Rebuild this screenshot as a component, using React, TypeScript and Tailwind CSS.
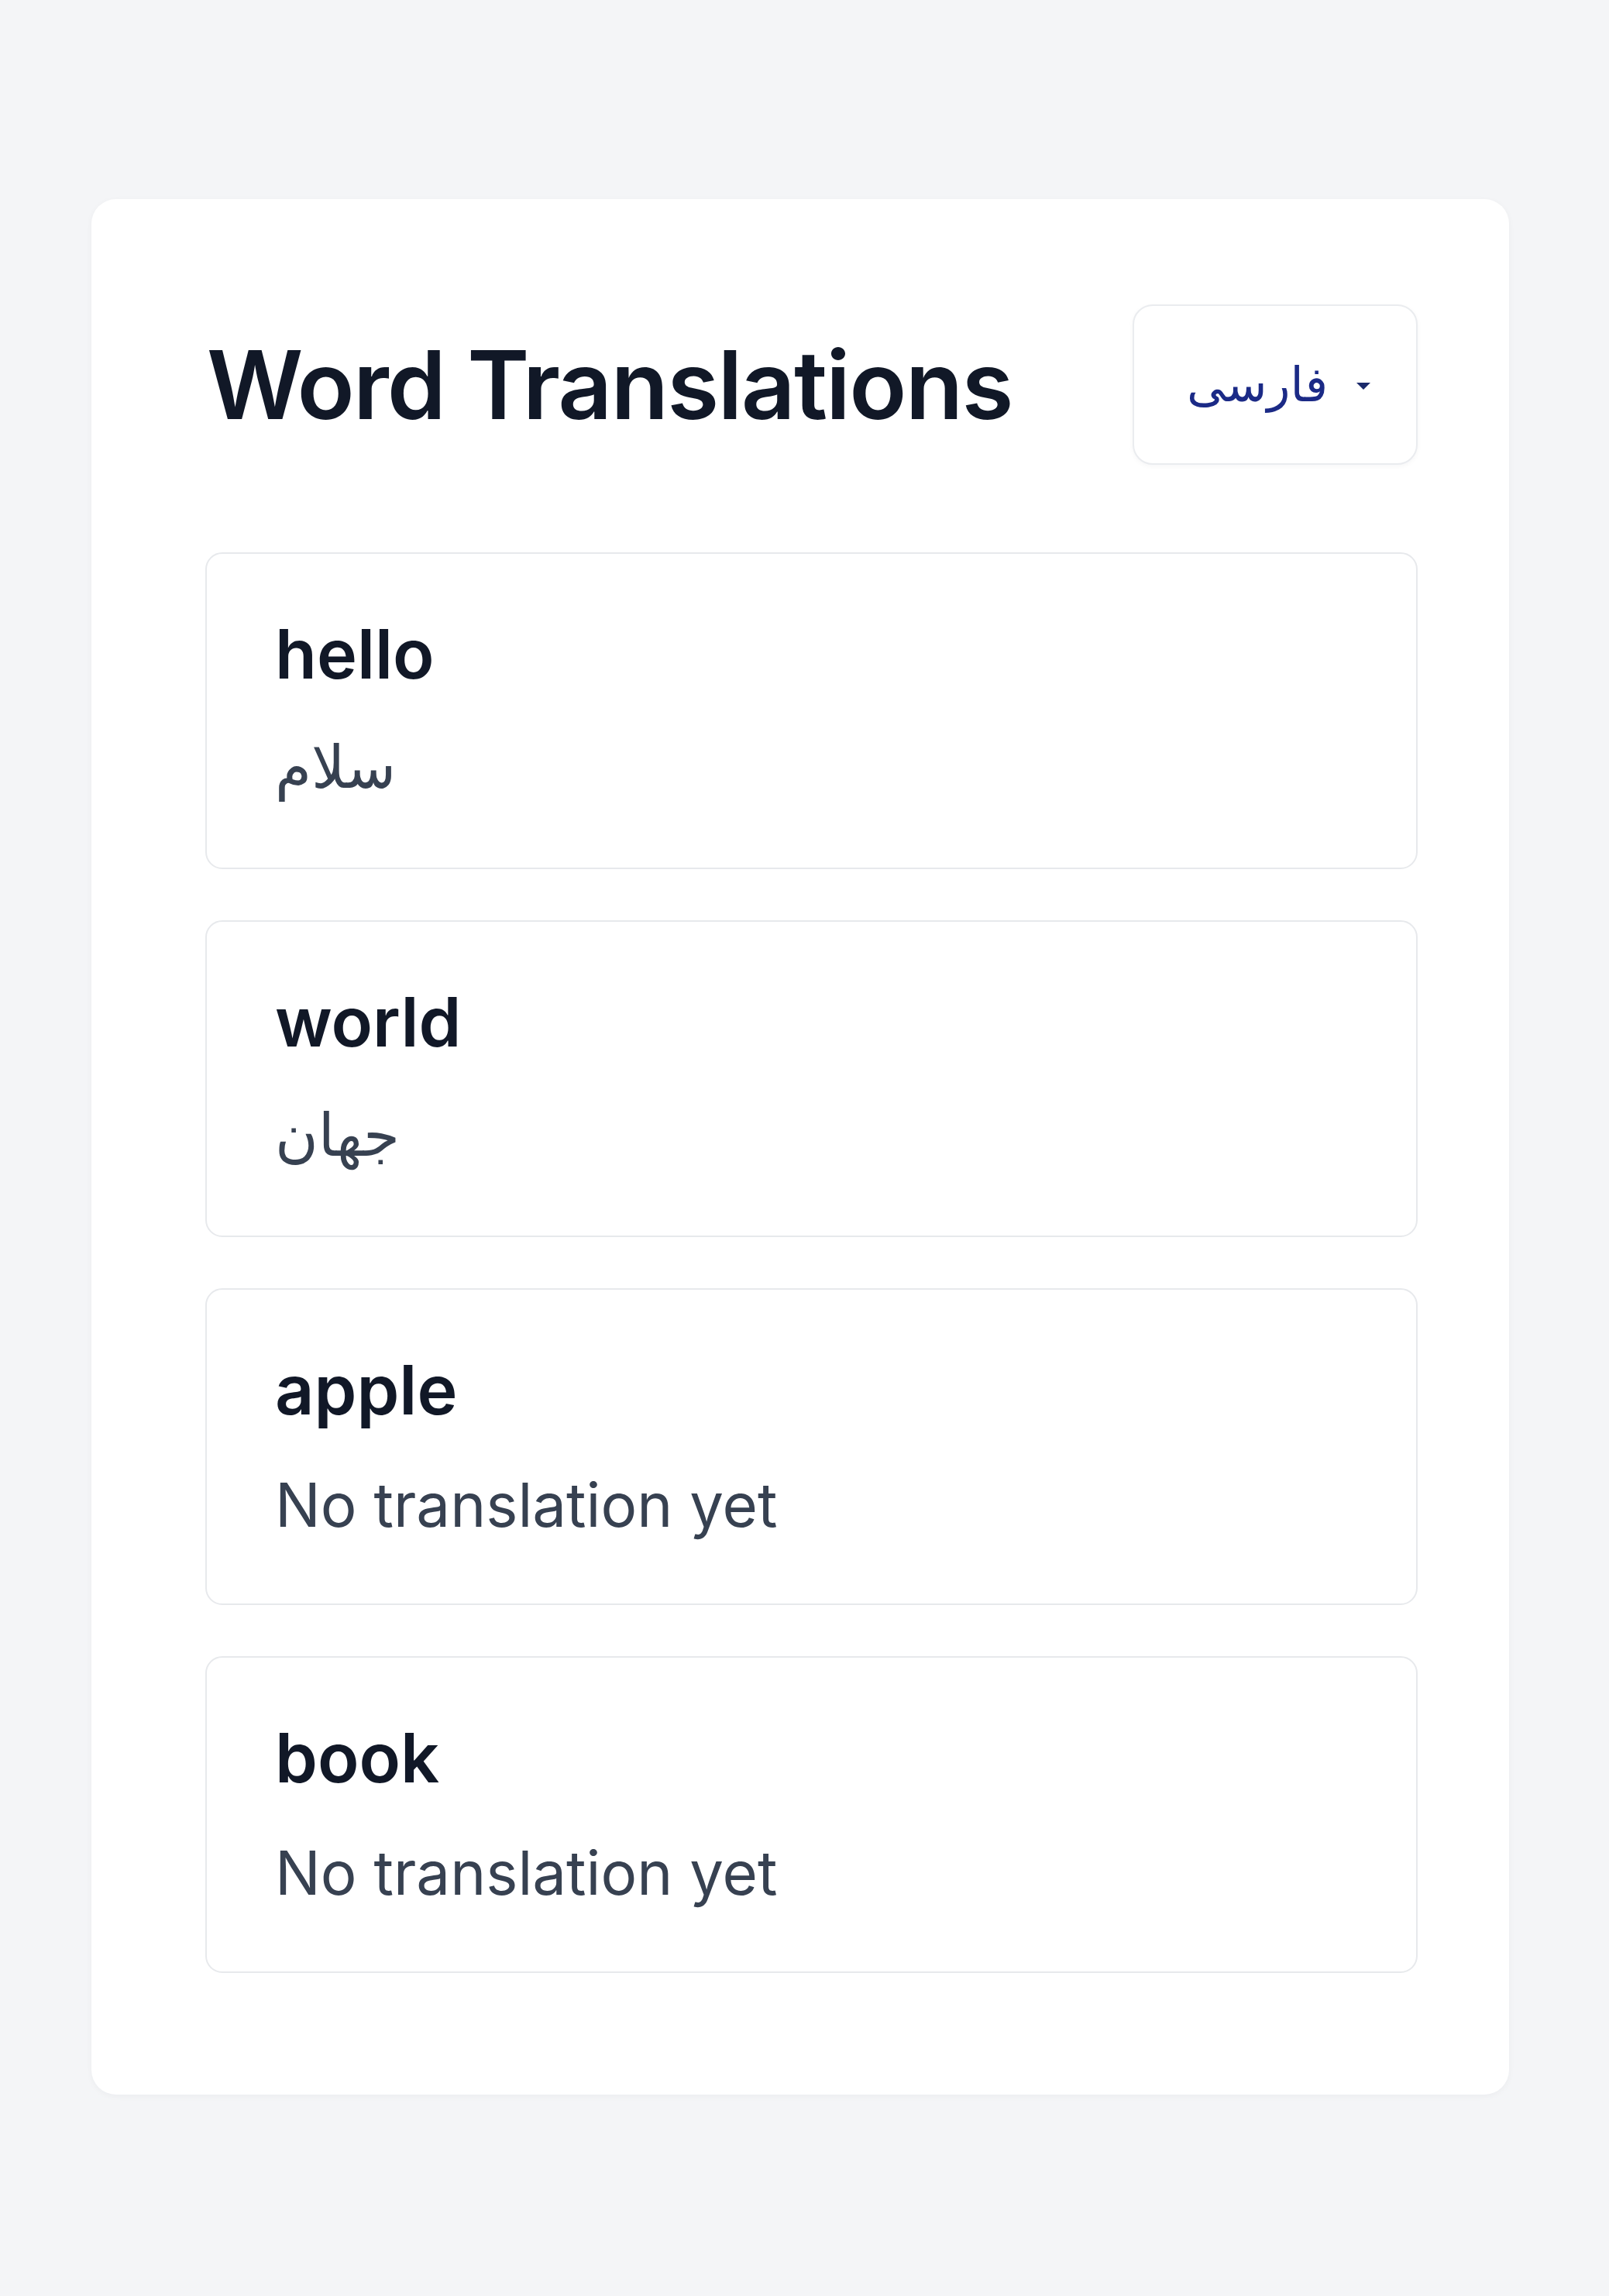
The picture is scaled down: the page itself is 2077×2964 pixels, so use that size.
const words = [
  { word: "hello", translation: "سلام" },
  { word: "world", translation: "جهان" },
  { word: "apple", translation: null },
  { word: "book", translation: null },
];

function LanguageSelect() {
  return (
    <button
      type="button"
      className="flex h-[207px] w-[368px] items-center justify-center gap-[36px] rounded-[26px] border-2 border-[#eaecef] bg-white pl-[10px] shadow-[0_2px_6px_rgba(15,23,42,0.04)]"
    >
      <span
        dir="rtl"
        className="text-[62px] leading-none text-[#1b2a86]"
        style={{ fontFamily: '"DejaVu Sans", Inter, sans-serif' }}
      >
        فارسی
      </span>
      <svg width="20" height="11" viewBox="0 0 20 11" className="mt-[4px] text-[#1b2a6b]">
        <path d="M1 1h18L10 10z" fill="currentColor" />
      </svg>
    </button>
  );
}

function WordCard({ word, translation }: { word: string; translation: string | null }) {
  return (
    <div className="flex h-[409px] flex-col rounded-[22px] border-2 border-[#e7e9ec] bg-white px-[88px] py-[68px]">
      <div className="text-[88px] font-semibold leading-[1.4] text-[#111827]">{word}</div>
      {translation ? (
        <div
          dir="rtl"
          className="mt-[32px] self-start text-[76px] leading-[1.4] text-[#374151]"
          style={{ fontFamily: '"DejaVu Sans", Inter, sans-serif' }}
        >
          {translation}
        </div>
      ) : (
        <div className="mt-[32px] text-[78px] leading-[1.4] text-[#374151]">No translation yet</div>
      )}
    </div>
  );
}

export default function App() {
  return (
    <div className="min-h-[2964px] w-full bg-[#f4f5f7] pt-[257px] pl-[118px] font-['Inter',sans-serif]">
      <div className="w-[1830px] rounded-[32px] bg-white pt-[136px] pr-[118px] pb-[157px] pl-[147px] shadow-[0_2px_8px_rgba(15,23,42,0.04)]">
        <div className="mb-[113px] flex items-center justify-between">
          <h1 className="pl-[2px] text-[122px] font-semibold leading-none tracking-[-0.015em] text-[#111827]">
            Word Translations
          </h1>
          <LanguageSelect />
        </div>
        <div className="flex flex-col gap-[66px]">
          {words.map((w) => (
            <WordCard key={w.word} word={w.word} translation={w.translation} />
          ))}
        </div>
      </div>
    </div>
  );
}
